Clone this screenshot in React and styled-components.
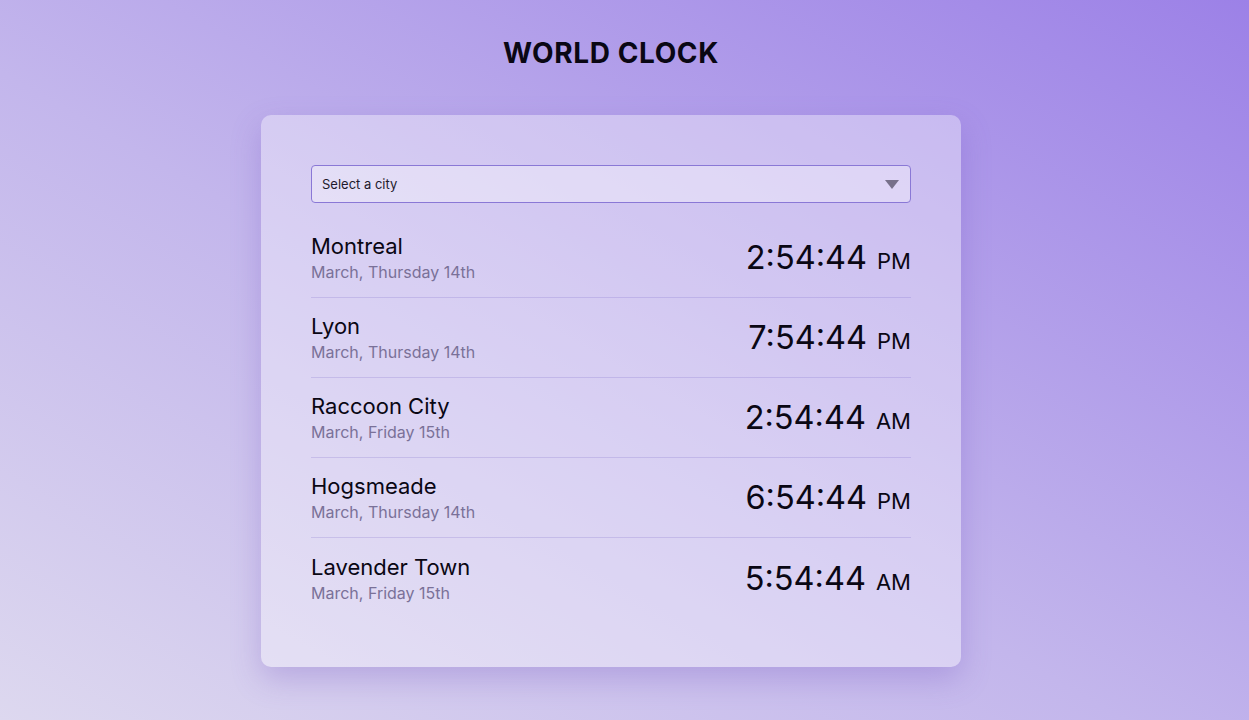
import React from 'react';
import styled, { createGlobalStyle } from 'styled-components';

const GlobalStyle = createGlobalStyle`
  html, body {
    margin: 0;
    padding: 0;
    height: 100%;
  }
  body {
    font-family: Inter, "Noto Sans", sans-serif;
    background: linear-gradient(to top right, #ddd8ef 0%, #c3b6ec 45%, #9c81e7 100%);
    background-attachment: fixed;
    min-height: 720px;
    overflow: hidden;
  }
  * {
    box-sizing: border-box;
  }
`;

const Page = styled.div`
  display: flex;
  flex-direction: column;
  align-items: center;
  padding: 36px 27px 0 0;
`;

const Title = styled.h1`
  margin: 0;
  font-size: 28px;
  line-height: 34px;
  font-weight: 700;
  color: #0a0714;
  letter-spacing: 0.6px;
`;

const Card = styled.div`
  margin-top: 45px;
  width: 700px;
  padding: 50px 50px 49px;
  border-radius: 10px;
  background: rgba(255, 255, 255, 0.36);
  box-shadow: 0 12px 30px rgba(110, 80, 190, 0.28);
`;

const SelectWrap = styled.div`
  position: relative;

  &::after {
    content: '';
    position: absolute;
    right: 12px;
    top: 15px;
    border-left: 7px solid transparent;
    border-right: 7px solid transparent;
    border-top: 9px solid #77708a;
    pointer-events: none;
  }
`;

const Select = styled.select`
  appearance: none;
  width: 100%;
  height: 38px;
  padding: 0 10px;
  font-family: Inter, "Noto Sans", sans-serif;
  font-size: 13px;
  color: #1e1a2c;
  background: rgba(255, 255, 255, 0.35);
  border: 1px solid #8a78d6;
  border-radius: 4px;
  outline: none;
`;

const List = styled.div`
  margin-top: 15px;
  display: flex;
  flex-direction: column;
`;

const Row = styled.div`
  height: 80px;
  display: flex;
  align-items: center;
  justify-content: space-between;
  border-bottom: ${(p) => (p.last ? 'none' : '1px solid rgba(120, 100, 200, 0.22)')};
`;

const Place = styled.div`
  display: flex;
  flex-direction: column;
  gap: 2px;
`;

const City = styled.div`
  font-size: 22px;
  line-height: 27px;
  color: #0a0714;
`;

const DateText = styled.div`
  font-size: 16px;
  line-height: 20px;
  color: #7a7198;
`;

const Time = styled.div`
  font-size: 32.5px;
  line-height: 40px;
  padding-top: 4px;
  color: #0a0714;
  display: flex;
  align-items: baseline;
  gap: 10px;
`;

const Meridiem = styled.span`
  font-size: 22px;
`;

const cities = [
  { name: 'Montreal', date: 'March, Thursday 14th', time: '2:54:44', ampm: 'PM' },
  { name: 'Lyon', date: 'March, Thursday 14th', time: '7:54:44', ampm: 'PM' },
  { name: 'Raccoon City', date: 'March, Friday 15th', time: '2:54:44', ampm: 'AM' },
  { name: 'Hogsmeade', date: 'March, Thursday 14th', time: '6:54:44', ampm: 'PM' },
  { name: 'Lavender Town', date: 'March, Friday 15th', time: '5:54:44', ampm: 'AM' },
];

export default function App() {
  return (
    <>
      <GlobalStyle />
      <Page>
        <Title>WORLD CLOCK</Title>
        <Card>
          <SelectWrap>
            <Select defaultValue="">
              <option value="">Select a city</option>
              {cities.map((c) => (
                <option key={c.name} value={c.name}>
                  {c.name}
                </option>
              ))}
            </Select>
          </SelectWrap>
          <List>
            {cities.map((c, i) => (
              <Row key={c.name} last={i === cities.length - 1}>
                <Place>
                  <City>{c.name}</City>
                  <DateText>{c.date}</DateText>
                </Place>
                <Time>
                  {c.time}
                  <Meridiem>{c.ampm}</Meridiem>
                </Time>
              </Row>
            ))}
          </List>
        </Card>
      </Page>
    </>
  );
}
